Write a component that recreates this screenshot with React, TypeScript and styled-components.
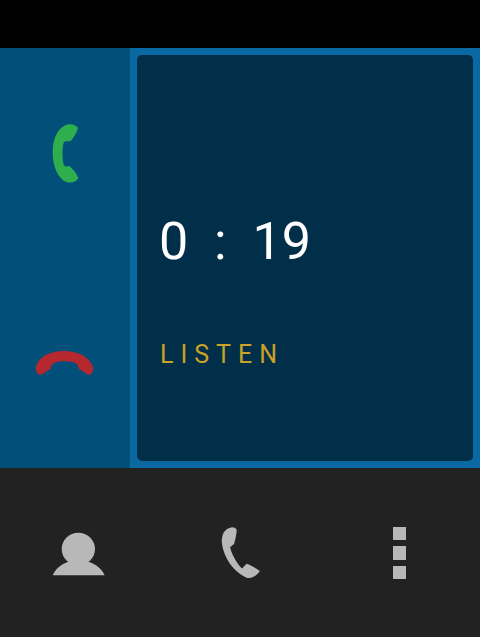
import React from "react";
import styled, { createGlobalStyle } from "styled-components";

const Global = createGlobalStyle`
  html, body { margin: 0; padding: 0; background: #000; }
  #root { width: 480px; height: 637px; }
`;

const Screen = styled.div`
  width: 480px;
  height: 637px;
  display: flex;
  flex-direction: column;
  overflow: hidden;
  background: #000;
`;

const StatusBar = styled.div`
  height: 48px;
  flex: none;
  background: #000;
`;

const CallArea = styled.div`
  height: 420px;
  flex: none;
  display: flex;
  background: #0a69a3;
`;

const CallActions = styled.div`
  width: 130px;
  flex: none;
  display: flex;
  flex-direction: column;
  align-items: center;
  padding-top: 76px;
  gap: 166px;
  box-sizing: border-box;
  background: #024f7a;
`;

const PanelFrame = styled.div`
  flex: 1;
  display: flex;
  padding: 7px;
`;

const Panel = styled.div`
  flex: 1;
  display: flex;
  flex-direction: column;
  padding: 156px 0 0 22px;
  border-radius: 5px;
  background: #012f4a;
  font-family: Roboto, "Liberation Sans", sans-serif;
`;

const Timer = styled.div`
  font-size: 52px;
  line-height: 61px;
  color: #fff;
  white-space: pre;
  letter-spacing: 0;
  word-spacing: 13px;
`;

const Action = styled.div`
  margin-top: 68px;
  margin-left: 1px;
  font-size: 25px;
  line-height: 29px;
  letter-spacing: 7px;
  color: #c9a227;
`;

const NavBar = styled.div`
  flex: 1;
  display: grid;
  grid-template-columns: repeat(3, 160px);
  background: #222;
`;

const NavItem = styled.div`
  display: flex;
  align-items: center;
  justify-content: center;
`;

const Dots = styled.div`
  display: flex;
  flex-direction: column;
  gap: 6px;
  margin-right: 1px;
  padding-top: 1px;
`;

const Dot = styled.div`
  width: 13px;
  height: 13.5px;
  background: #b8b8b8;
`;

const Icon = styled.svg<{ $w: number; $h: number }>`
  display: block;
  width: ${(p) => p.$w}px;
  height: ${(p) => p.$h}px;
`;

export default function App() {
  return (
    <Screen>
      <Global />
      <StatusBar />
      <CallArea>
        <CallActions>
          <Icon $w={28.3} $h={60} viewBox="150 250 85 180">
            <path
              fill="#2fae4e"
              d="M231 262C222 250 205 248 190 255C168 268 155 295 155 335C155 375 168 405 188 420C205 430 226 426 232 412C226 396 215 384 205 376C198 376 192 380 189 374C183 358 183 318 189 304C193 300 200 302 208 302C218 292 228 275 231 262Z"
            />
          </Icon>
          <Icon $w={59.3} $h={26} viewBox="105 90 178 78">
            <path
              fill="#b5282f"
              d="M108 138C120 106 155 93 192 93C232 93 268 108 280 143C280 156 274 166 264 164L236 146C236 132 225 124 192 124C165 124 154 130 152 146L124 164C112 166 106 154 108 138Z"
            />
          </Icon>
        </CallActions>
        <PanelFrame>
          <Panel>
            <Timer>0 : 19</Timer>
            <Action>LISTEN</Action>
          </Panel>
        </PanelFrame>
      </CallArea>
      <NavBar>
        <NavItem>
          <Icon $w={55} $h={48} viewBox="71 56 165 144">
            <ellipse cx="147" cy="116" rx="50" ry="49" fill="#b8b8b8" />
            <path
              fill="#b8b8b8"
              d="M70 195C78 176 95 162 115 155L180 155C200 162 218 176 226 195Z"
            />
          </Icon>
        </NavItem>
        <NavItem>
          <Icon $w={41} $h={53} viewBox="570 44 123 160">
            <path
              fill="#b8b8b8"
              d="M606 48C590 50 575 62 575 90C577 130 605 180 650 200C665 204 680 195 690 180C680 172 662 162 650 158L636 172C618 155 604 125 600 108L612 98C616 85 620 68 620 55C616 50 612 48 606 48Z"
            />
          </Icon>
        </NavItem>
        <NavItem>
          <Dots>
            <Dot />
            <Dot />
            <Dot />
          </Dots>
        </NavItem>
      </NavBar>
    </Screen>
  );
}
